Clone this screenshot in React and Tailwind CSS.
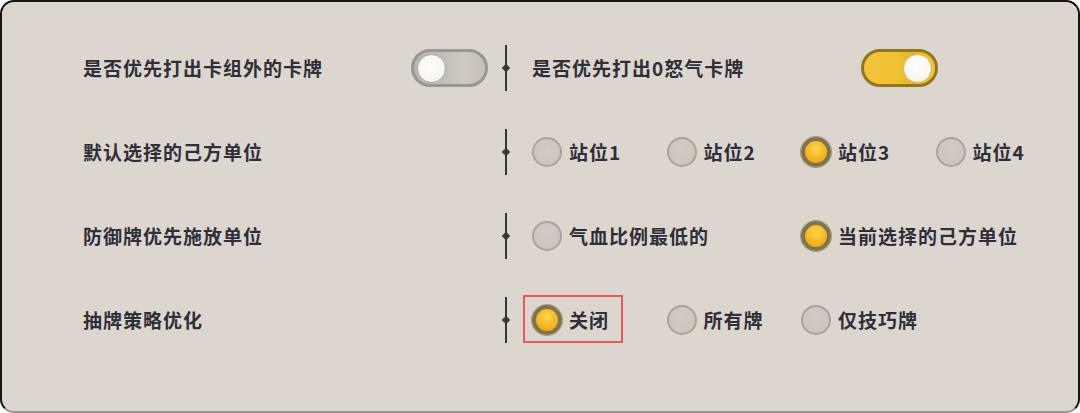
import React from "react";

const font = { fontFamily: '"Noto Sans CJK SC", "Noto Sans", sans-serif' };

function Divider() {
  return (
    <div className="relative flex h-[46px] w-[8px] shrink-0 items-center justify-center">
      <div className="h-full w-[2px] bg-[#3a3634]" />
      <div className="absolute h-[6px] w-[6px] rotate-45 bg-[#3a3634]" />
    </div>
  );
}

function Toggle({ on }) {
  if (on) {
    return (
      <div className="flex h-[38px] w-[77px] items-center justify-end rounded-full border-[3px] border-[#93761f] bg-[linear-gradient(90deg,#f3c23a_0%,#f0c232_45%,#e8b424_70%,#f2c535_100%)] px-[3px]">
        <div className="h-[29px] w-[29px] rounded-full border border-[#d8c070] bg-[radial-gradient(circle_at_45%_40%,#ffffff,#f1efe9)]" />
      </div>
    );
  }
  return (
    <div className="flex h-[38px] w-[77px] items-center rounded-full border-[3px] border-[#9b9690] bg-[linear-gradient(90deg,#b9b4ae_0%,#c4beb8_45%,#cfc9c2_70%,#c6c0b9_100%)] px-[3px]">
      <div className="h-[29px] w-[29px] rounded-full border border-[#b0aba5] bg-[radial-gradient(circle_at_45%_40%,#ffffff,#f1efe9)]" />
    </div>
  );
}

function Radio({ checked, label, boxed }) {
  return (
    <div className="relative flex items-center gap-[7px]">
      {checked ? (
        <div className="h-[30px] w-[30px] shrink-0 rounded-full border-[4px] border-[#7f7352] bg-[radial-gradient(circle_at_50%_35%,#ffd452,#f2b51c_60%,#e3a210)] shadow-[0_0_0_1px_#a89c78]" />
      ) : (
        <div className="h-[30px] w-[30px] shrink-0 rounded-full border-[2px] border-[#a9a39c] bg-[radial-gradient(circle_at_50%_40%,#d3ccc5,#c9c2ba)]" />
      )}
      <span className="text-[19px] font-bold tracking-[1px] text-[#2f2f3a]">{label}</span>
      {boxed && (
        <span className="absolute -left-[9px] -top-[10px] h-[48px] w-[100px] border-2 border-[#e35b5b]" />
      )}
    </div>
  );
}

function RadioRow({ options, selected, boxed }) {
  return (
    <div className="flex">
      {options.map((opt, i) => (
        <div key={opt} className="w-[134.5px] shrink-0">
          <Radio checked={i === selected} label={opt} boxed={boxed && i === selected} />
        </div>
      ))}
    </div>
  );
}

const label = "text-[19px] font-bold tracking-[1px] text-[#2f2f3a]";

export default function App() {
  return (
    <div className="h-[413px] w-[1080px] bg-white" style={font}>
      <div className="h-full w-full rounded-[14px] border-2 border-[#161412] border-b-[#9c9791] bg-[#ddd6cf] pl-[81px] pt-[24px]">
        {/* row 1 */}
        <div className="flex h-[84px] items-center">
          <div className="flex w-[405px] items-center justify-between">
            <span className={label}>是否优先打出卡组外的卡牌</span>
            <Toggle on={false} />
          </div>
          <div className="ml-[14px] mr-[22px]">
            <Divider />
          </div>
          <div className="flex w-[406px] items-center justify-between">
            <span className={label}>是否优先打出0怒气卡牌</span>
            <Toggle on />
          </div>
        </div>

        {/* row 2 */}
        <div className="flex h-[84px] items-center">
          <span className={`w-[405px] ${label}`}>默认选择的己方单位</span>
          <div className="ml-[14px] mr-[22px]">
            <Divider />
          </div>
          <RadioRow options={["站位1", "站位2", "站位3", "站位4"]} selected={2} />
        </div>

        {/* row 3 */}
        <div className="flex h-[84px] items-center">
          <span className={`w-[405px] ${label}`}>防御牌优先施放单位</span>
          <div className="ml-[14px] mr-[22px]">
            <Divider />
          </div>
          <div className="flex">
            <div className="w-[269px] shrink-0">
              <Radio label="气血比例最低的" />
            </div>
            <Radio checked label="当前选择的己方单位" />
          </div>
        </div>

        {/* row 4 */}
        <div className="flex h-[84px] items-center">
          <span className={`w-[405px] ${label}`}>抽牌策略优化</span>
          <div className="ml-[14px] mr-[22px]">
            <Divider />
          </div>
          <RadioRow options={["关闭", "所有牌", "仅技巧牌"]} selected={0} boxed />
        </div>
      </div>
    </div>
  );
}
